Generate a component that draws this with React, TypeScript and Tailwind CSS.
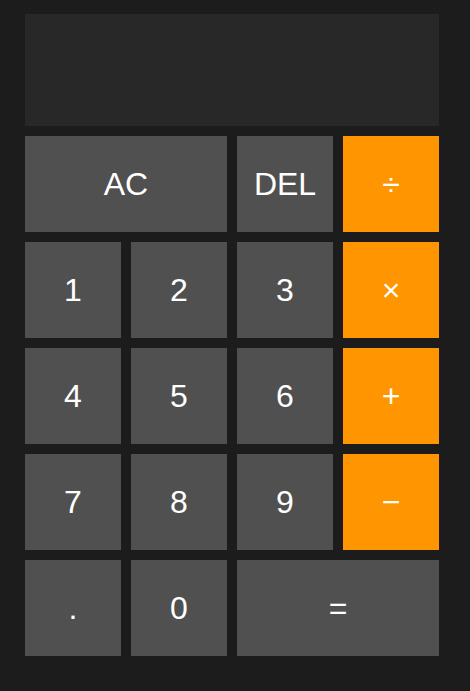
import React from 'react';

const keys: { label: string; kind: 'num' | 'op'; span?: string }[] = [
  { label: 'AC', kind: 'num', span: 'col-span-2' },
  { label: 'DEL', kind: 'num' },
  { label: '÷', kind: 'op' },
  { label: '1', kind: 'num' },
  { label: '2', kind: 'num' },
  { label: '3', kind: 'num' },
  { label: '×', kind: 'op' },
  { label: '4', kind: 'num' },
  { label: '5', kind: 'num' },
  { label: '6', kind: 'num' },
  { label: '+', kind: 'op' },
  { label: '7', kind: 'num' },
  { label: '8', kind: 'num' },
  { label: '9', kind: 'num' },
  { label: '−', kind: 'op' },
  { label: '.', kind: 'num' },
  { label: '0', kind: 'num' },
  { label: '=', kind: 'num', span: 'col-span-2' },
];

export default function App() {
  return (
    <div
      className="min-h-[691px] w-full bg-[#1c1c1c] pl-[25px] pt-[14px] pb-[35px]"
      style={{ fontFamily: '"Liberation Sans", Arial, sans-serif' }}
    >
      <div className="w-[414px]">
        {/* Display */}
        <div className="mb-[10px] h-[112px] bg-[#282828]" />

        <div className="grid grid-cols-[repeat(4,96px)] auto-rows-[96px] gap-[10px]">
          {keys.map((k) => (
            <button
              key={k.label}
              className={`${k.span ?? ''} flex items-center justify-center text-[32px] text-white ${
                k.kind === 'op' ? 'bg-[#ff9500]' : 'bg-[#505050]'
              }`}
            >
              {k.label}
            </button>
          ))}
        </div>
      </div>
    </div>
  );
}
